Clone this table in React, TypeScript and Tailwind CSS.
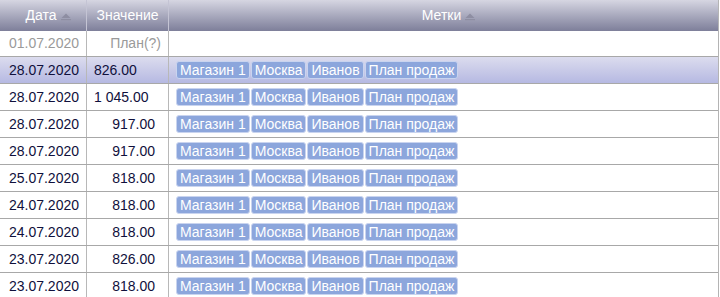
const rows = [
  { date: "28.07.2020", value: "826.00", left: true, selected: true },
  { date: "28.07.2020", value: "1 045.00", left: true },
  { date: "28.07.2020", value: "917.00" },
  { date: "28.07.2020", value: "917.00" },
  { date: "25.07.2020", value: "818.00" },
  { date: "24.07.2020", value: "818.00" },
  { date: "24.07.2020", value: "818.00" },
  { date: "23.07.2020", value: "826.00" },
  { date: "23.07.2020", value: "818.00" },
];

const tags = ["Магазин 1", "Москва", "Иванов", "План продаж"];

function SortArrow() {
  return (
    <svg width="10" height="8" viewBox="0 0 10 8" className="ml-[4px] mt-[3px]">
      <path d="M5 0.5 L9.5 5 L0.5 5 Z" fill="#8e8ea2" />
      <rect x="0" y="6" width="10" height="1.2" fill="#8e8ea2" />
    </svg>
  );
}

export default function App() {
  return (
    <div className="w-[720px] h-[297px] overflow-hidden bg-white font-['Liberation_Sans',Arial,sans-serif] text-[14px]">
      <div className="w-[719px] border-r border-[#b4b4b4]">
        {/* header */}
        <div className="flex h-[31px] bg-gradient-to-b from-[#d6d6e2] to-[#7e7f9a] text-white">
          <div className="w-[87px] flex items-center justify-center pl-[10px] border-r border-[#c4c4d4]">
            Дата
            <SortArrow />
          </div>
          <div className="w-[82px] flex items-center justify-center border-r border-[#c4c4d4]">Значение</div>
          <div className="flex-1 flex items-center justify-center pl-[10px]">
            Метки
            <SortArrow />
          </div>
        </div>

        {/* new row */}
        <div className="flex h-[26px] border-b border-[#a8a8a8] text-[#9a9a9a]">
          <div className="w-[87px] flex items-center justify-end pr-[7px] border-r border-[#b8b8b8]">01.07.2020</div>
          <div className="w-[82px] flex items-center justify-end pr-[7px] border-r border-[#b8b8b8]">План(?)</div>
          <div className="flex-1" />
        </div>

        {rows.map((r, i) => (
          <div
            key={i}
            className={`flex h-[27px] border-b border-[#a8a8a8] text-[#10103c] ${
              r.selected ? "bg-gradient-to-b from-[#dcdcee] to-[#b6b9e2]" : ""
            }`}
          >
            <div className="w-[87px] flex items-center justify-end pr-[7px] border-r border-[#b8b8b8]">{r.date}</div>
            <div
              className={`w-[82px] flex items-center border-r border-[#b8b8b8] ${
                r.left ? "justify-start pl-[7px]" : "justify-end pr-[13px]"
              }`}
            >
              {r.value}
            </div>
            <div className="flex-1 flex items-center gap-[1px] pl-[7px]">
              {tags.map((t) => (
                <span
                  key={t}
                  className="h-[18px] px-[3px] flex items-center rounded-[3px] border border-[#c9d4ef] bg-[#8ca6dc] text-white text-[14px] leading-none"
                >
                  {t}
                </span>
              ))}
            </div>
          </div>
        ))}
      </div>
    </div>
  );
}
